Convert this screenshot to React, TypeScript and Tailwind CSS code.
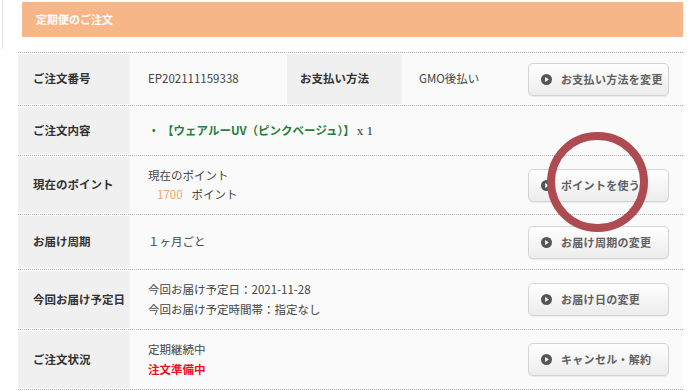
import React from 'react';

const FONT = { fontFamily: '"Noto Sans CJK JP", "Noto Sans", sans-serif' };

function PlayBtn({ label }: { label: string }) {
  return (
    <button className="w-[141px] h-[33px] shrink-0 rounded-[5px] border border-[#d4d4d4] bg-gradient-to-b from-white to-[#ececec] shadow-[0_1px_1px_rgba(0,0,0,0.06)] flex items-center pl-[12px] gap-[9px] text-[11px] font-bold text-[#606060] whitespace-nowrap">
      <svg width="11" height="11" viewBox="0 0 12 12" className="shrink-0">
        <circle cx="6" cy="6" r="6" fill="#555" />
        <path d="M4.6 3.4 L8.6 6 L4.6 8.6 Z" fill="#fff" />
      </svg>
      <span className="tracking-[0.3px]">{label}</span>
    </button>
  );
}

interface Row { label: string; h: string; body: React.ReactNode; btn?: string; }

export default function App() {
  const rows: Row[] = [
    {
      label: 'ご注文内容', h: 'h-[47px]',
      body: (
        <div className="flex items-center">
          <span className="font-bold text-[#1f7f3c]">・ 【ウェアルーUV（ピンクベージュ）】</span>
          <span className="ml-[2px] text-[#333] font-['Liberation_Serif'] text-[13px]">x 1</span>
        </div>
      ),
    },
    {
      label: '現在のポイント', h: 'h-[56px]', btn: 'ポイントを使う',
      body: (
        <div className="flex flex-col gap-[2px]">
          <span>現在のポイント</span>
          <span className="pl-[9px]"><span className="text-[#f0a46a]">1700</span><span className="ml-[9px]">ポイント</span></span>
        </div>
      ),
    },
    { label: 'お届け周期', h: 'h-[52px]', btn: 'お届け周期の変更', body: <span>１ヶ月ごと</span> },
    {
      label: '今回お届け予定日', h: 'h-[57px]', btn: 'お届け日の変更',
      body: (
        <div className="flex flex-col gap-[2px]">
          <span>今回お届け予定日：2021-11-28</span>
          <span>今回お届け予定時間帯：指定なし</span>
        </div>
      ),
    },
    {
      label: 'ご注文状況', h: 'h-[57px]', btn: 'キャンセル・解約',
      body: (
        <div className="flex flex-col gap-[2px]">
          <span>定期継続中</span>
          <span className="text-[#e8141a] font-bold">注文準備中</span>
        </div>
      ),
    },
  ];

  return (
    <div className="relative w-[700px] h-[391px] bg-white overflow-hidden text-[11.5px] text-[#444]" style={FONT}>
      <div className="ml-[2px] w-[684px] h-[49px] border-l border-[#e2e2e2] pt-[2px] pl-[19px] pr-[3px]">
        <div className="h-[35px] bg-[#f6b688] flex items-center pl-[14px] text-white font-bold text-[11px]">定期便のご注文</div>
      </div>

      <div className="ml-[18px] w-[665px] mt-[3px] border-t border-dotted border-[#a8a8a8]">
        <div className="py-[1px] border-b border-dotted border-[#a8a8a8]">
          <div className="h-[50px] flex items-center">
            <div className="w-[112px] self-stretch bg-[#f0f0f0] flex items-center pl-[15px] font-bold text-[#333]">ご注文番号</div>
            <div className="w-[157px] self-stretch bg-[#fafafa] flex items-center pl-[18px]">EP202111159338</div>
            <div className="w-[115px] self-stretch bg-[#f0f0f0] flex items-center pl-[13px] font-bold text-[#333]">お支払い方法</div>
            <div className="flex-1 self-stretch bg-[#fafafa] flex items-center pl-[17px] justify-between pr-[14px]">
              <span>GMO後払い</span>
              <PlayBtn label="お支払い方法を変更" />
            </div>
          </div>
        </div>
        {rows.map(r => (
          <div key={r.label} className="py-[1px] border-b border-dotted border-[#a8a8a8]">
            <div className={`${r.h} flex`}>
              <div className="w-[112px] bg-[#f0f0f0] flex items-center pl-[15px] font-bold text-[#333]">{r.label}</div>
              <div className="flex-1 bg-[#fafafa] flex items-center justify-between pl-[18px] pr-[14px]">
                {r.body}
                {r.btn && <PlayBtn label={r.btn} />}
              </div>
            </div>
          </div>
        ))}
      </div>

      <div className="absolute left-[547px] top-[132px] w-[101px] h-[100px] rounded-full border-[8px] border-[#ae4a51]" />
    </div>
  );
}
